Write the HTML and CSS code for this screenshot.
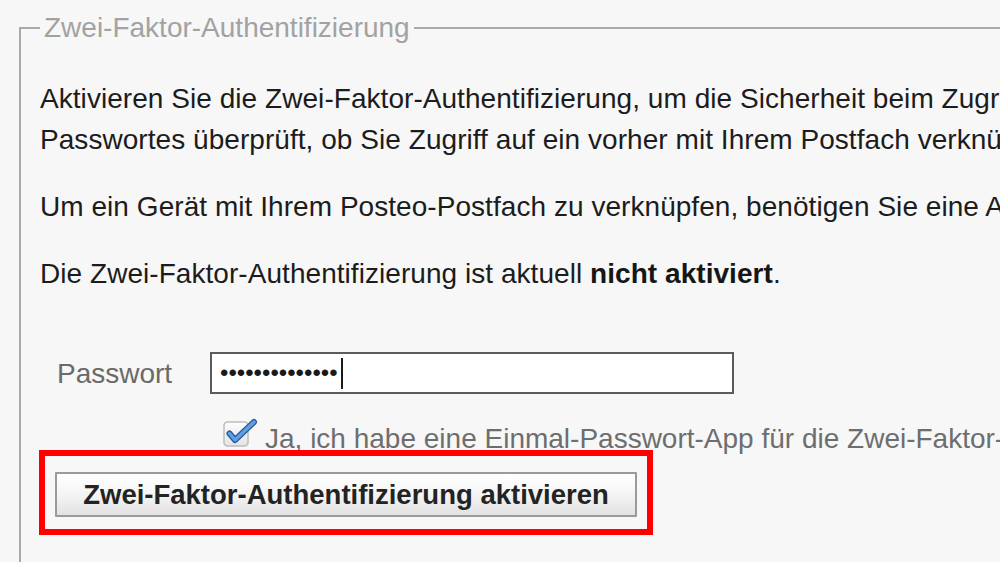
FILE: index.html
```html
<!DOCTYPE html>
<html lang="de">
<head>
<meta charset="utf-8">
<title>Zwei-Faktor-Authentifizierung</title>
<link rel="stylesheet" href="styles.css">
</head>
<body>
<fieldset class="tfa">
  <legend class="tfa-legend">Zwei-Faktor-Authentifizierung</legend>
  <p class="tfa-text">Aktivieren Sie die Zwei-Faktor-Authentifizierung, um die Sicherheit beim Zugriff auf Ihr Postfach zu erhöhen. Dabei wird nach der Eingabe Ihres<br>Passwortes überprüft, ob Sie Zugriff auf ein vorher mit Ihrem Postfach verknüpftes Gerät haben.</p>
  <p class="tfa-text">Um ein Gerät mit Ihrem Posteo-Postfach zu verknüpfen, benötigen Sie eine App für Einmal-Passwörter.</p>
  <p class="tfa-text">Die Zwei-Faktor-Authentifizierung ist aktuell <strong>nicht aktiviert</strong>.</p>

  <div class="field-row">
    <label class="field-label">Passwort</label>
    <div class="field-input" role="textbox"><span class="dots">••••••••••••••</span><span class="caret"></span></div>
  </div>

  <div class="check-row">
    <svg class="check-icon" width="36" height="30" viewBox="0 0 36 30" aria-hidden="true">
      <defs>
        <linearGradient id="boxg" x1="0" y1="0" x2="0" y2="1">
          <stop offset="0" stop-color="#fdfdfd"/>
          <stop offset="1" stop-color="#e4e4e4"/>
        </linearGradient>
      </defs>
      <rect x="1" y="4" width="24" height="24" rx="3.5" fill="url(#boxg)" stroke="#bdbdbd" stroke-width="1.5"/>
      <path d="M6.5 15.5 L12 22 L31 4" fill="none" stroke="#2a5a9e" stroke-width="6" stroke-linecap="round" stroke-linejoin="round"/>
      <path d="M6.5 15.5 L12 22 L31 4" fill="none" stroke="#5f9fe3" stroke-width="3.4" stroke-linecap="round" stroke-linejoin="round"/>
    </svg>
    <span class="check-label">Ja, ich habe eine Einmal-Passwort-App für die Zwei-Faktor-Authentifizierung eingerichtet.</span>
  </div>

  <div class="action-row">
    <div class="button-wrap">
      <button class="activate-btn" type="button">Zwei-Faktor-Authentifizierung aktivieren</button>
      <span class="highlight" aria-hidden="true"></span>
    </div>
  </div>
</fieldset>
</body>
</html>
```

FILE: styles.css
```css
html, body {
  margin: 0;
  padding: 0;
}

body {
  width: 1000px;
  height: 562px;
  overflow: hidden;
  background: #f7f7f7;
  font-family: "Liberation Sans", Arial, sans-serif;
  font-size: 28px;
  line-height: 41px;
  color: #1c1c1c;
}

.tfa {
  box-sizing: border-box;
  width: 1400px;
  margin: 7px 0 0 19px;
  padding: 30px 19px 120px 19px;
  border: 2px solid #a9a9a9;
  min-inline-size: 0;
}

.tfa-legend {
  padding: 0 4px;
  color: #a2a2a2;
  line-height: 41px;
}

.tfa-text {
  margin: 0;
  white-space: nowrap;
  letter-spacing: 0.05px;
}

.tfa-text + .tfa-text {
  margin-top: 26px;
}

.tfa-text strong {
  font-weight: bold;
  color: #161616;
}

.field-row {
  display: flex;
  align-items: center;
  margin-top: 58px;
  padding-left: 17px;
}

.field-label {
  width: 153px;
  color: #6a6a6a;
}

.field-input {
  box-sizing: border-box;
  width: 524px;
  height: 42px;
  border: 2px solid #5c5c5c;
  background: #ffffff;
  display: flex;
  align-items: center;
  padding-left: 8px;
}

.dots {
  font-size: 24px;
  line-height: 24px;
  color: #1a1a1a;
}

.caret {
  display: inline-block;
  width: 2px;
  height: 31px;
  margin-left: 3px;
  background: #1a1a1a;
}

.check-row {
  display: flex;
  align-items: flex-start;
  margin-top: 24px;
  padding-left: 183px;
  white-space: nowrap;
}

.check-icon {
  flex: none;
  display: block;
  margin-right: 6px;
}

.check-label {
  color: #6e6e6e;
}

.action-row {
  margin-top: 13px;
  padding-left: 15px;
}

.button-wrap {
  position: relative;
  display: inline-block;
  vertical-align: top;
}

.activate-btn {
  display: block;
  box-sizing: border-box;
  width: 582px;
  height: 45px;
  margin: 0;
  padding: 0;
  border: 2px solid #9a9a9a;
  border-radius: 1px;
  background: linear-gradient(to bottom, #ffffff 0%, #f6f6f6 45%, #e2e2e2 100%);
  font-family: "Liberation Sans", Arial, sans-serif;
  font-size: 27.5px;
  font-weight: bold;
  line-height: 41px;
  color: #232323;
  text-align: center;
}

.highlight {
  position: absolute;
  top: -22px;
  left: -16px;
  right: -16px;
  bottom: -18px;
  border: 6px solid #ff0000;
  pointer-events: none;
}
```
